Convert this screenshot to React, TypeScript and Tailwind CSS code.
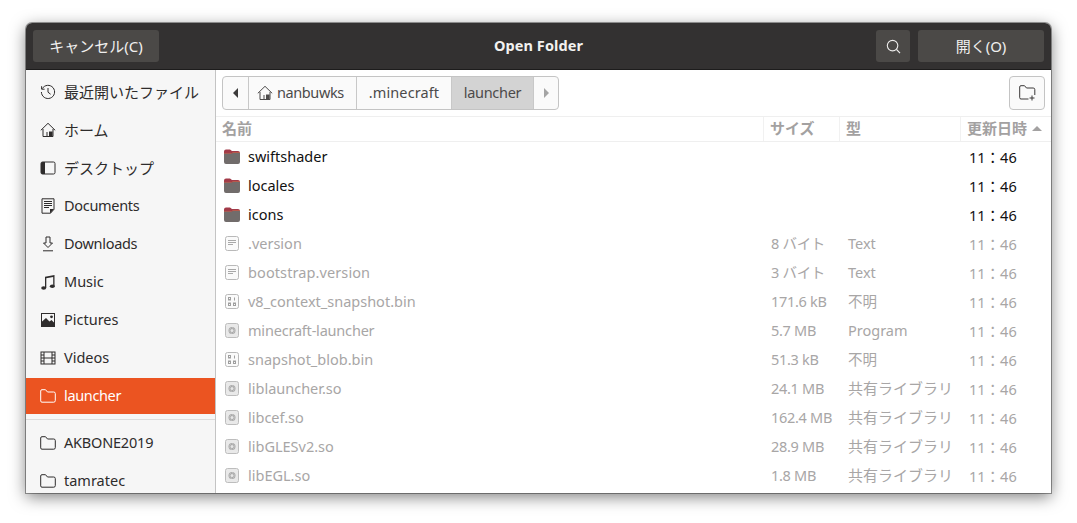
import React from "react";

const FONT = "font-['Noto_Sans','Noto_Sans_CJK_JP',sans-serif]";

type IconProps = { className?: string };

const Recent = ({ className }: IconProps) => (
  <svg viewBox="0 0 16 16" className={className} fill="none" stroke="currentColor" strokeWidth="1">
    <path d="M2.300 4.600A6.600 6.600 0 1 1 1.400 8" />
    <path d="M1.600 2.200v3h3" />
    <path d="M8 4v4.200l2.600 2" />
  </svg>
);
const Home = ({ className }: IconProps) => (
  <svg viewBox="0 0 16 16" className={className} fill="none" stroke="currentColor" strokeWidth="1">
    <path d="M.8 8.300 8 1.300l7.200 7" />
    <path d="M3 7v7.500h4V10M13 7v7.500" />
    <rect x="9" y="9.500" width="3.600" height="5" fill="currentColor" stroke="none" />
    <path d="M3 14.500h10" />
  </svg>
);
const Desktop = ({ className }: IconProps) => (
  <svg viewBox="0 0 16 16" className={className} fill="none" stroke="currentColor" strokeWidth="1">
    <rect x="1" y="2" width="14" height="12" rx="1.500" />
    <path d="M1 3.500A1.500 1.500 0 0 1 2.500 2H5v12H2.500A1.500 1.500 0 0 1 1 12.500Z" fill="currentColor" stroke="none" />
  </svg>
);
const Doc = ({ className }: IconProps) => (
  <svg viewBox="0 0 16 16" className={className} fill="none" stroke="currentColor" strokeWidth="1">
    <path d="M2 .8h12v10.500L10.500 15.200H2Z" />
    <path d="M4 3.500h8M4 5.500h8M4 7.500h8M4 9.500h5" />
    <path d="M10 11h4l-4 4.400Z" fill="currentColor" stroke="none" />
  </svg>
);
const Download = ({ className }: IconProps) => (
  <svg viewBox="0 0 16 16" className={className} fill="none" stroke="currentColor" strokeWidth="1">
    <path d="M6 1h4v6h2.500L8 11.500 3.500 7H6Z" />
    <path d="M3 14.800h10" />
  </svg>
);
const Music = ({ className }: IconProps) => (
  <svg viewBox="0 0 16 16" className={className} fill="currentColor">
    <path d="M5 2.800 14.500 1v11h-1.300V3L6.300 4.300V14H5Z" />
    <ellipse cx="3.700" cy="14" rx="2.500" ry="1.800" />
    <ellipse cx="12.300" cy="12.300" rx="2.500" ry="1.800" />
  </svg>
);
const Pictures = ({ className }: IconProps) => (
  <svg viewBox="0 0 16 16" className={className} fill="none">
    <rect x="1.500" y="1.500" width="13" height="13" stroke="currentColor" />
    <path d="M1.500 10 6 6l3.500 3.500L11.500 8l3 3v3.500h-13Z" fill="currentColor" />
    <circle cx="11.500" cy="4.800" r="1.400" fill="currentColor" />
    <rect x="1.500" y="12" width="13" height="2.500" fill="currentColor" />
  </svg>
);
const Videos = ({ className }: IconProps) => (
  <svg viewBox="0 0 16 16" className={className} fill="none" stroke="currentColor" strokeWidth="1">
    <rect x="1" y="2" width="14" height="12" />
    <path d="M4 2v12M12 2v12M4 8h8M1 5h3M1 8h3M1 11h3M12 5h3M12 8h3M12 11h3" />
  </svg>
);
const Folder = ({ className }: IconProps) => (
  <svg viewBox="0 0 16 14" className={className} fill="none" stroke="currentColor" strokeWidth="1">
    <path d="M.7 2A1.300 1.300 0 0 1 2 .7h3.500L7.500 3h6.200a1.600 1.600 0 0 1 1.600 1.600v7a1.600 1.600 0 0 1-1.600 1.600H2A1.300 1.300 0 0 1 .7 11.900Z" />
  </svg>
);
const NewFolder = ({ className }: IconProps) => (
  <svg viewBox="0 0 17 16" className={className} fill="none" stroke="currentColor" strokeWidth="1">
    <path d="M9.500 14H2a1.300 1.300 0 0 1-1.300-1.300V2A1.300 1.300 0 0 1 2 .7h3.500L7.500 3h6.700a1.600 1.600 0 0 1 1.600 1.600V10" />
    <path d="M13 10.500v5M10.500 13h5" />
  </svg>
);
const Search = ({ className }: IconProps) => (
  <svg viewBox="0 0 16 16" className={className} fill="none" stroke="currentColor" strokeWidth="1.200">
    <circle cx="7" cy="7" r="5.600" />
    <path d="m11.200 11.200 3.800 3.800" />
  </svg>
);
const ColorFolder = () => (
  <svg viewBox="0 0 16 15" className="w-[16px] h-[15px] shrink-0">
    <path d="M0 2.500A2 2 0 0 1 2 .5h4L8 2h6a2 2 0 0 1 2 2v3H0Z" fill="#a23a48" />
    <path d="M0 4.400h7.500L9 3.600h7" fill="none" stroke="#c9764f" strokeWidth=".6" />
    <path d="M0 4.700h7.500L9 3.900h7V13a2 2 0 0 1-2 2H2a2 2 0 0 1-2-2Z" fill="#716c6b" />
  </svg>
);
const FileText = () => (
  <svg viewBox="0 0 14 15" className="w-[14px] h-[15px] shrink-0 ml-[1px]" fill="#fafafa" stroke="#b9b9b9" strokeWidth="1">
    <rect x=".5" y=".5" width="13" height="14" rx="2" />
    <path d="M3 4.500h8M3 6.500h8M3 8.500h5" stroke="#a8a8a8" />
  </svg>
);
const FileBin = () => (
  <svg viewBox="0 0 14 15" className="w-[14px] h-[15px] shrink-0 ml-[1px]" fill="#fafafa" stroke="#b9b9b9" strokeWidth="1">
    <rect x=".5" y=".5" width="13" height="14" rx="2" />
    <g stroke="#9f9f9f" fill="none">
      <rect x="3.500" y="3.500" width="2" height="2.500" />
      <path d="M9.500 3.500v3" />
      <rect x="3.500" y="9" width="2" height="2.500" />
      <rect x="8.500" y="9" width="2" height="2.500" />
    </g>
  </svg>
);
const FileGear = () => (
  <svg viewBox="0 0 14 15" className="w-[14px] h-[15px] shrink-0 ml-[1px]">
    <rect x=".5" y=".5" width="13" height="14" rx="2" fill="#e9e9e9" stroke="#bdbdbd" />
    <circle cx="7" cy="7.500" r="3.500" fill="#a9a9a9" />
    <circle cx="7" cy="7.500" r="2.600" fill="none" stroke="#cfcfcf" strokeDasharray="1 1" />
    <circle cx="7" cy="7.500" r="1.500" fill="#e6e6e6" />
  </svg>
);

const places = [
  { label: "最近開いたファイル", Icon: Recent, text: "text-[15px]" },
  { label: "ホーム", Icon: Home, text: "text-[15px]" },
  { label: "デスクトップ", Icon: Desktop, text: "text-[15px]" },
  { label: "Documents", Icon: Doc, text: "text-[14.5px] tracking-[-0.3px]" },
  { label: "Downloads", Icon: Download, text: "text-[14.5px] tracking-[-0.3px]" },
  { label: "Music", Icon: Music, text: "text-[14.5px]" },
  { label: "Pictures", Icon: Pictures, text: "text-[14.5px]" },
  { label: "Videos", Icon: Videos, text: "text-[14.5px]" },
];

const JP = "共有ライブラリ";
const rows = [
  { name: "swiftshader", kind: "dir" },
  { name: "locales", kind: "dir" },
  { name: "icons", kind: "dir" },
  { name: ".version", kind: "text", size: "8 バイト", type: "Text" },
  { name: "bootstrap.version", kind: "text", size: "3 バイト", type: "Text", track: "tracking-[0.1px]" },
  { name: "v8_context_snapshot.bin", kind: "bin", size: "171.6 kB", type: "不明" },
  { name: "minecraft-launcher", kind: "gear", size: "5.7 MB", type: "Program", track: "tracking-[-0.2px]" },
  { name: "snapshot_blob.bin", kind: "bin", size: "51.3 kB", type: "不明" },
  { name: "liblauncher.so", kind: "gear", size: "24.1 MB", type: JP },
  { name: "libcef.so", kind: "gear", size: "162.4 MB", type: JP },
  { name: "libGLESv2.so", kind: "gear", size: "28.9 MB", type: JP },
  { name: "libEGL.so", kind: "gear", size: "1.8 MB", type: JP },
];

const COLS = "grid grid-cols-[547px_76px_121px_1fr]";

function PlaceRow({ label, icon, text }: { label: string; icon: React.ReactNode; text: string }) {
  return (
    <div className="h-[38px] flex items-center pl-[14px] gap-[8px] text-[#2e2c2c] shrink-0">
      {icon}
      <span className={`whitespace-nowrap ${text}`}>{label}</span>
    </div>
  );
}

export default function App() {
  return (
    <div className={`w-[1077px] h-[523px] bg-white pt-[23px] pl-[26px] overflow-hidden ${FONT}`}>
      <div className="w-[1025px] h-[470px] rounded-t-[6px] overflow-hidden flex flex-col bg-white shadow-[0_4px_16px_rgba(0,0,0,0.5),0_0_0_1px_rgba(90,90,90,0.55)]">
        <header className="h-[47px] shrink-0 bg-[#333131] border-b border-[#1d1c1c] grid grid-cols-[1fr_auto_1fr] items-center px-[7px]">
          <div>
            <button className="w-[126px] h-[32px] rounded-[3px] bg-[#4b4947] text-[#f0efee] text-[15px] pt-[1px] flex items-center justify-center">
              キャンセル(C)
            </button>
          </div>
          <div className="text-[#f2f1f0] text-[14.5px] font-bold tracking-[0.1px]">Open Folder</div>
          <div className="flex justify-end gap-[8px]">
            <button className="w-[34px] h-[32px] rounded-[3px] bg-[#4b4947] text-[#ecebea] flex items-center justify-center">
              <Search className="w-[15px] h-[15px]" />
            </button>
            <button className="w-[126px] h-[32px] rounded-[3px] bg-[#4b4947] text-[#f0efee] text-[15px] pt-[1px] flex items-center justify-center">
              開く(O)
            </button>
          </div>
        </header>

        <div className="flex flex-1 min-h-0">
          <aside className="w-[190px] shrink-0 bg-[#f6f6f6] border-r border-[#c4c4c4] flex flex-col overflow-hidden pt-[3px]">
            {places.map(({ label, Icon, text }) => (
              <PlaceRow key={label} label={label} text={text} icon={<Icon className="w-[16px] h-[16px] shrink-0" />} />
            ))}
            <div className="h-[36px] shrink-0 mt-[1px] bg-[#eb5421] text-white flex items-center pl-[14px] gap-[8px] text-[14.5px]">
              <Folder className="w-[16px] h-[14px] shrink-0" />
              <span className="tracking-[-0.35px]">launcher</span>
            </div>
            <div className="h-px bg-[#dcdcdc] mt-[5px] mb-[4px] shrink-0" />
            <PlaceRow label="AKBONE2019" text="text-[14.5px] tracking-[-0.2px]" icon={<Folder className="w-[16px] h-[14px] shrink-0" />} />
            <PlaceRow label="tamratec" text="text-[14.5px]" icon={<Folder className="w-[16px] h-[14px] shrink-0" />} />
          </aside>

          <main className="flex-1 min-w-0 flex flex-col bg-white">
            <div className="h-[47px] shrink-0 border-b border-[#efefef] flex items-start justify-between pt-[6px] px-[6px]">
              <div className="h-[34px] flex rounded-[4px] border border-[#c4c4c4] bg-[#fafafa] overflow-hidden text-[14.5px] text-[#4c4a4a]">
                <div className="w-[26px] flex items-center justify-center border-r border-[#c8c8c8]">
                  <span className="w-0 h-0 border-y-[5px] border-y-transparent border-r-[5px] border-r-[#3c3b3b]" />
                </div>
                <div className="w-[108px] flex items-center pl-[8px] gap-[4px] border-r border-[#c8c8c8]">
                  <Home className="w-[16px] h-[16px] shrink-0" />
                  <span className="tracking-[-0.4px]">nanbuwks</span>
                </div>
                <div className="w-[95px] flex items-center justify-center border-r border-[#c8c8c8]">
                  <span className="tracking-[0.1px]">.minecraft</span>
                </div>
                <div className="w-[82px] flex items-center justify-center bg-[#d3d3d3] border-r border-[#c8c8c8]">
                  <span className="tracking-[-0.3px]">launcher</span>
                </div>
                <div className="w-[24px] flex items-center justify-center">
                  <span className="w-0 h-0 border-y-[5px] border-y-transparent border-l-[5px] border-l-[#a4a4a4]" />
                </div>
              </div>
              <button className="w-[36px] h-[34px] rounded-[4px] border border-[#c4c4c4] bg-[#fafafa] text-[#3a3838] flex items-center justify-center">
                <NewFolder className="w-[17px] h-[16px]" />
              </button>
            </div>

            <div className={`${COLS} h-[25px] shrink-0 border-b border-[#efefef] text-[15px] font-bold text-[#a3a1a1]`}>
              <div className="pl-[6px] pb-[1px] flex items-center">名前</div>
              <div className="pl-[6px] pb-[1px] flex items-center border-l border-[#f1f1f1]">サイズ</div>
              <div className="pl-[6px] pb-[1px] flex items-center border-l border-[#f1f1f1]">型</div>
              <div className="pl-[6px] pb-[1px] flex items-center gap-[5px] border-l border-[#f1f1f1] whitespace-nowrap">
                更新日時
                <span className="w-0 h-0 border-x-[5px] border-x-transparent border-b-[5px] border-b-[#a3a1a1]" />
              </div>
            </div>

            <div className="flex-1 min-h-0 overflow-hidden">
              {rows.map((r) => {
                const isDir = r.kind === "dir";
                return (
                  <div
                    key={r.name}
                    className={`${COLS} h-[29px] text-[14.5px] ${isDir ? "text-[#111111]" : "text-[#a8a6a6]"}`}
                  >
                    <div className={`pl-[8px] flex items-center min-w-0 ${isDir ? "gap-[8px]" : "gap-[9px]"}`}>
                      {isDir ? <ColorFolder /> : r.kind === "text" ? <FileText /> : r.kind === "bin" ? <FileBin /> : <FileGear />}
                      <span className={`whitespace-nowrap ${r.track ?? ""}`}>{r.name}</span>
                    </div>
                    <div className="pl-[8px] flex items-center whitespace-nowrap tracking-[-0.3px]">{r.size}</div>
                    <div className={`pl-[9px] flex items-center whitespace-nowrap ${r.type === JP ? "text-[15px]" : ""}`}>{r.type}</div>
                    <div className="pl-[9px] pt-[3px] flex items-center whitespace-nowrap">11：46</div>
                  </div>
                );
              })}
            </div>
          </main>
        </div>
      </div>
    </div>
  );
}
